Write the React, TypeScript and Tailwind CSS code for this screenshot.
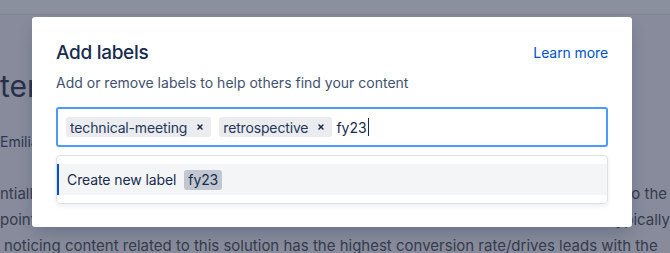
import { X } from 'lucide-react';

const font = { fontFamily: 'Inter, "Noto Sans", sans-serif' };

const Tag = ({ text }: { text: string }) => (
  <span className="flex items-center h-5 rounded-[3px] bg-[#ebecf0] pl-1 pr-[7px] text-[14px] tracking-[-0.15px] text-[#253858]">
    {text}
    <X className="ml-[9px] w-[8px] h-[8px] text-[#172b4d]" strokeWidth={4.5} />
  </span>
);

const App = () => {
  return (
    <div className="relative w-[670px] h-[253px] overflow-hidden bg-[#878b9b]" style={font}>
      {/* page underneath the dialog */}
      <div className="h-[15px] bg-[#8b909f] border-b border-[#7e8393]" />
      <div className="text-[30px] leading-9 mt-[53px] text-[#27304a] whitespace-nowrap">ter</div>
      <div className="text-[14px] leading-5 mt-[28px] text-[#2c3652] whitespace-nowrap">Emilia</div>
      <div className="mt-[29px] text-[15px] leading-[26px] text-[#363c4b]">
        <div className="flex justify-between whitespace-nowrap">
          <span>ntially,</span>
          <span className="pr-[3px]">to the</span>
        </div>
        <div className="flex justify-between whitespace-nowrap">
          <span>point</span>
          <span>typically</span>
        </div>
        <div className="whitespace-nowrap pl-[4px]">
          noticing content related to this solution has the highest conversion rate/drives leads with the
        </div>
      </div>

      {/* dialog */}
      <div className="absolute top-[17px] left-[32px] w-[600px] rounded-[3px] bg-white px-6 pt-6 pb-[23px] shadow-[0_8px_16px_-4px_rgba(9,30,66,0.25)]">
        <div className="flex items-center justify-between">
          <h1 className="text-[19px] leading-6 font-medium tracking-[-0.3px] text-[#172b4d]">Add labels</h1>
          <a className="text-[14px] leading-5 tracking-[-0.1px] text-[#0052cc]">Learn more</a>
        </div>
        <p className="mt-2 text-[14px] leading-5 text-[#42526e]">Add or remove labels to help others find your content</p>

        <div className="mt-[14px] h-10 flex items-center gap-2 rounded-[3px] border-2 border-[#4c9aff] px-2">
          <Tag text="technical-meeting" />
          <Tag text="retrospective" />
          <span className="flex items-center text-[14px] text-[#172b4d] -ml-1">
            fy23<span className="ml-px w-px h-[18px] bg-[#172b4d]" />
          </span>
        </div>

        <div className="mt-2 rounded-[4px] border border-[#dfe1e6] py-2 shadow-[0_2px_4px_rgba(9,30,66,0.08)]">
          <div className="flex items-center h-[31px] bg-[#f4f5f7] border-l-2 border-[#0052cc] pl-2 gap-2 text-[14px] tracking-[-0.1px] text-[#172b4d]">
            <span>Create new label</span>
            <span className="rounded-[3px] bg-[#c1c7d0] px-1 leading-5">fy23</span>
          </div>
        </div>
      </div>
    </div>
  );
};

export default App;
